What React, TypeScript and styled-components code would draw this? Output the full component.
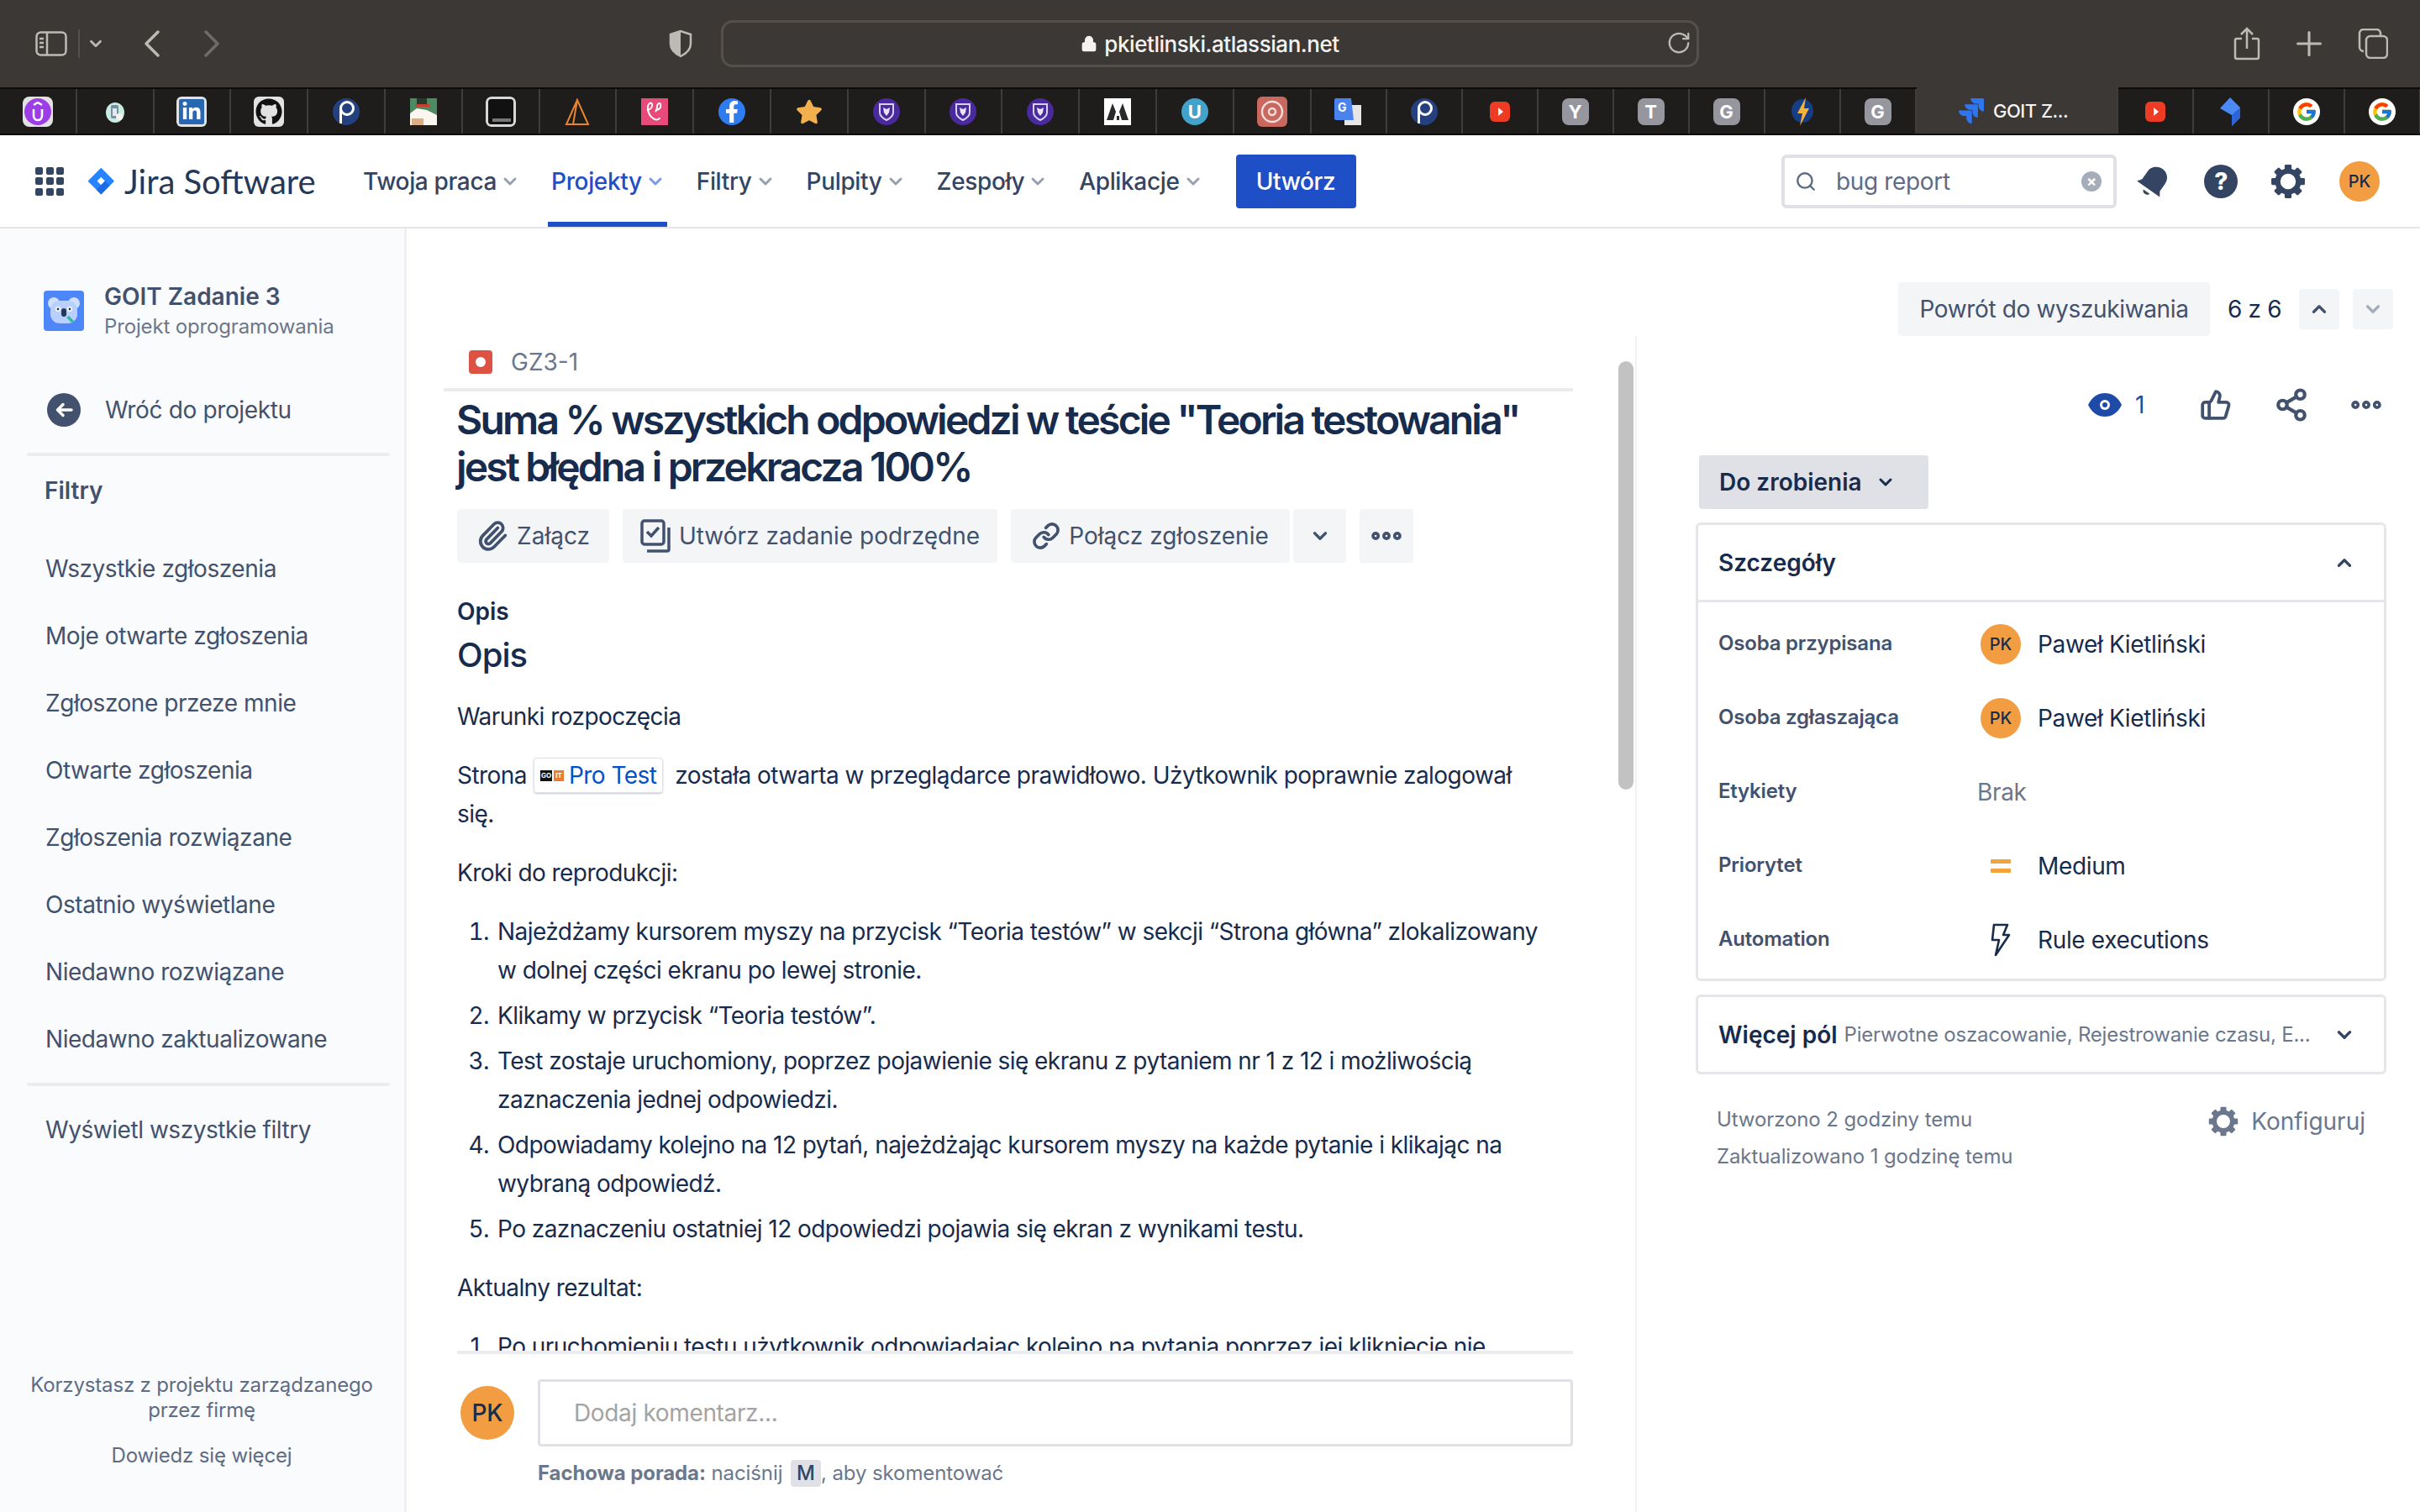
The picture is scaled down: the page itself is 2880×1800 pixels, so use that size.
import React from "react";
import styled, { createGlobalStyle } from "styled-components";
import { ChevronDown, ChevronUp, Lock, RotateCw, Search, Paperclip, Link, ThumbsUp, Share2, Ellipsis, ChevronLeft, ChevronRight, Plus } from "lucide-react";
import { FaGithub, FaLinkedinIn, FaFacebookF, FaStar } from "react-icons/fa";
import { FcGoogle } from "react-icons/fc";

const GlobalStyle = createGlobalStyle`
  html, body { margin: 0; padding: 0; background: #fff; }
  body { font-family: Inter, "Noto Sans", "Liberation Sans", sans-serif; color: #172b4d; letter-spacing: -0.35px; }
  * { box-sizing: border-box; }
`;

const Page = styled.div`
  width: 2880px;
  height: 1800px;
  overflow: hidden;
  display: flex;
  flex-direction: column;
`;

/* safari chrome */
const Toolbar = styled.div`
  height: 104px;
  flex: none;
  background: #3c3835;
  display: flex;
  align-items: center;
  color: #bdbab6;
  padding: 0 38px 0 42px;
`;
const ToolIcon = styled.div<{ $w: number; $dim?: boolean }>`
  width: ${(p) => p.$w}px;
  flex: none;
  display: flex;
  align-items: center;
  justify-content: center;
  opacity: ${(p) => (p.$dim ? 0.4 : 1)};
  svg {
    flex: none;
  }
`;
const SidebarToggle = styled.div`
  width: 53px;
  height: 34px;
  flex: none;
  display: flex;
  align-items: center;
  border-right: 2px solid #55504c;
`;
const ToolGroup = styled.div`
  display: flex;
  align-items: center;
  width: 753px;
`;
const UrlBar = styled.div`
  width: 1164px;
  height: 56px;
  margin-left: 33px;
  border: 3px solid #55504c;
  border-radius: 14px;
  display: flex;
  align-items: center;
  justify-content: center;
  position: relative;
  color: #f4f3f1;
  font-size: 26px;
  font-weight: 500;
  letter-spacing: -0.45px;
  gap: 8px;
`;
const Reload = styled.div`
  position: absolute;
  right: 6px;
  top: 9px;
  color: #bdbab6;
`;
const ToolRight = styled.div`
  margin-left: auto;
  display: flex;
  align-items: center;
  gap: 44px;
`;

const TabStrip = styled.div`
  height: 57px;
  flex: none;
  display: flex;
  background: #1e1d1c;
  border-top: 2px solid #0b0b0b;
  border-bottom: 2px solid #0b0b0b;
`;
const Tab = styled.div<{ $wide?: boolean }>`
  flex: 0 0 ${(p) => (p.$wide ? 91.8 : 90)}px;
  display: flex;
  align-items: center;
  justify-content: center;
  border-right: 2px solid #3f3d3b;
`;
const ActiveTab = styled.div`
  flex: 0 0 240px;
  margin-top: -2px;
  padding-right: 10px;
  background: #3c3835;
  display: flex;
  align-items: center;
  justify-content: center;
  gap: 8px;
  color: #f4f3f1;
  font-size: 22px;
  font-weight: 500;
  letter-spacing: -0.5px;
  border-right: 2px solid #3f3d3b;
`;
const Fav = styled.div<{ $bg?: string; $color?: string; $radius?: number; $size?: number; $font?: number }>`
  width: ${(p) => p.$size ?? 32}px;
  height: ${(p) => p.$size ?? 32}px;
  border-radius: ${(p) => p.$radius ?? 0}px;
  background: ${(p) => p.$bg ?? "transparent"};
  color: ${(p) => p.$color ?? "#fff"};
  display: flex;
  align-items: center;
  justify-content: center;
  font-size: ${(p) => p.$font ?? 22}px;
  font-weight: 700;
  letter-spacing: 0;
  overflow: hidden;
  flex: none;
`;

/* jira nav */
const Nav = styled.div`
  height: 111px;
  flex: none;
  background: #fff;
  border-bottom: 2px solid #e4e6ea;
  display: flex;
  align-items: center;
  padding: 0 48px 0 42px;
`;
const Waffle = styled.div`
  width: 34px;
  height: 34px;
  display: grid;
  grid-template-columns: repeat(3, 9px);
  grid-auto-rows: 9px;
  gap: 3.5px;
  flex: none;
  span {
    background: #344563;
    border-radius: 2px;
  }
`;
const Brand = styled.div`
  display: flex;
  align-items: center;
  gap: 10px;
  margin-left: 26px;
  font-family: Lato, Inter, sans-serif;
  font-size: 40px;
  font-weight: 400;
  letter-spacing: 0;
  color: #253858;
  width: 326px;
  flex: none;
`;
const NavItems = styled.div`
  display: flex;
  align-items: center;
  gap: 31px;
`;
const NavItem = styled.div<{ $active?: boolean }>`
  display: flex;
  align-items: center;
  gap: 4px;
  height: 109px;
  padding: 0 2px 0 4px;
  font-size: 28px;
  font-weight: 500;
  position: relative;
  color: ${(p) => (p.$active ? "#1f4fc6" : "#344563")};
  svg {
    color: ${(p) => (p.$active ? "#7a9be6" : "#97a0af")};
  }
  &::after {
    content: "";
    display: ${(p) => (p.$active ? "block" : "none")};
    position: absolute;
    left: 0;
    right: 0;
    bottom: 0;
    height: 6px;
    background: #1f4fc6;
  }
`;
const CreateButton = styled.div`
  margin-left: 37px;
  width: 143px;
  height: 64px;
  border-radius: 4px;
  background: #1f4fc6;
  color: #fff;
  font-size: 28px;
  font-weight: 500;
  display: flex;
  align-items: center;
  justify-content: center;
`;
const SearchBox = styled.div`
  margin-left: auto;
  width: 399px;
  height: 64px;
  border: 4px solid #dfe1e6;
  border-radius: 6px;
  display: flex;
  align-items: center;
  padding: 0 14px 0 12px;
  color: #5e6c84;
  font-size: 28px;
  gap: 23px;
`;
const ClearDot = styled.div`
  margin-left: auto;
  width: 24px;
  height: 24px;
  border-radius: 50%;
  background: #a5adba;
  color: #fff;
  display: flex;
  align-items: center;
  justify-content: center;
  font-size: 18px;
  font-weight: 700;
`;
const NavIcons = styled.div`
  display: flex;
  align-items: center;
  gap: 34px;
  margin-left: 22px;
`;
const Avatar = styled.div<{ $size: number; $offset?: number }>`
  width: ${(p) => p.$size}px;
  height: ${(p) => p.$size}px;
  margin-left: ${(p) => p.$offset ?? 0}px;
  border-radius: 50%;
  background: #f29d41;
  color: #172b4d;
  flex: none;
  display: flex;
  align-items: center;
  justify-content: center;
  font-size: ${(p) => (p.$size > 50 ? 28 : 20)}px;
  font-weight: 500;
  letter-spacing: 0;
`;

const Body = styled.div`
  flex: 1;
  display: flex;
  min-height: 0;
`;

/* sidebar */
const Sidebar = styled.aside`
  width: 484px;
  flex: none;
  background: #fafbfc;
  border-right: 3px solid #eeeff2;
  display: flex;
  flex-direction: column;
  padding: 0 16px 0 32px;
  color: #42526e;
  font-size: 28px;
  letter-spacing: -0.45px;
`;
const ProjectHead = styled.div`
  display: flex;
  align-items: center;
  gap: 24px;
  margin: 62px 0 0 20px;
`;
const ProjectIcon = styled.div`
  width: 48px;
  height: 48px;
  border-radius: 4px;
  background: #4c86f9;
  flex: none;
  display: flex;
  align-items: center;
  justify-content: center;
`;
const ProjectName = styled.div`
  font-size: 28px;
  font-weight: 600;
  line-height: 38px;
  letter-spacing: 0;
`;
const ProjectType = styled.div`
  font-size: 24px;
  line-height: 34px;
  letter-spacing: -0.15px;
  color: #6b778c;
`;
const BackRow = styled.div`
  display: flex;
  align-items: center;
  gap: 29px;
  margin: 62px 0 0 24px;
  height: 40px;
  letter-spacing: -0.35px;
`;
const BackDot = styled.div`
  width: 40px;
  height: 40px;
  border-radius: 50%;
  background: #42526e;
  color: #fff;
  flex: none;
  display: flex;
  align-items: center;
  justify-content: center;
`;
const SideRule = styled.div<{ $gap: number }>`
  height: 4px;
  background: #ebecf0;
  border-radius: 2px;
  margin-top: ${(p) => p.$gap}px;
  width: 432px;
  flex: none;
`;
const SideTitle = styled.div`
  font-weight: 600;
  letter-spacing: 0;
  margin: 23px 0 0 21px;
  height: 36px;
  line-height: 36px;
`;
const SideList = styled.div`
  display: flex;
  flex-direction: column;
  margin-top: 35px;
`;
const SideLink = styled.div<{ $gap?: number }>`
  height: 80px;
  line-height: 80px;
  margin-left: 22px;
  margin-top: ${(p) => p.$gap ?? 0}px;
`;
const SideFoot = styled.div`
  margin-top: auto;
  margin-bottom: 52px;
  text-align: center;
  font-size: 24px;
  line-height: 30px;
  letter-spacing: -0.15px;
  color: #5e6c84;
  width: 416px;
`;
const FootLink = styled.div`
  margin-top: 24px;
`;

/* main */
const Main = styled.main`
  flex: 1;
  min-width: 0;
  display: flex;
  flex-direction: column;
`;
const ReturnBar = styled.div`
  height: 128px;
  flex: none;
  display: flex;
  align-items: flex-end;
  justify-content: flex-end;
  padding-right: 32px;
`;
const ReturnButton = styled.div`
  height: 64px;
  width: 371px;
  border-radius: 4px;
  background: #f4f5f7;
  color: #42526e;
  font-size: 28px;
  display: flex;
  align-items: center;
  justify-content: center;
`;
const Counter = styled.div`
  height: 64px;
  display: flex;
  align-items: center;
  white-space: nowrap;
  font-size: 28px;
  margin: 0 20px 0 21px;
  width: 65px;
`;
const PagerButton = styled.div<{ $dim?: boolean }>`
  width: 48px;
  height: 48px;
  margin-bottom: 8px;
  border-radius: 4px;
  background: #f4f5f7;
  color: ${(p) => (p.$dim ? "#a5adba" : "#42526e")};
  display: flex;
  align-items: center;
  justify-content: center;
  & + & {
    margin-left: 16px;
  }
`;
const Split = styled.div`
  flex: 1;
  min-height: 0;
  display: flex;
`;
const IssueCol = styled.div`
  width: 1464px;
  flex: none;
  display: flex;
  flex-direction: column;
  border-right: 2px solid #f1f2f4;
  position: relative;
`;
const Scroller = styled.div`
  flex: 1;
  min-height: 0;
  overflow: hidden;
  margin-left: 44px;
  width: 1344px;
`;
const ScrollThumb = styled.div`
  position: absolute;
  left: 1442px;
  top: 30px;
  width: 18px;
  height: 510px;
  border-radius: 9px;
  background: #c2c2c2;
`;
const KeyRow = styled.div`
  height: 66px;
  border-bottom: 4px solid #ebecf0;
  display: flex;
  align-items: center;
  padding: 0 0 0 30px;
  gap: 22px;
  color: #6b778c;
  font-size: 28px;
  letter-spacing: 0;
`;
const BugIcon = styled.div`
  width: 28px;
  height: 28px;
  border-radius: 4px;
  background: #dc5243;
  display: flex;
  align-items: center;
  justify-content: center;
  &::after {
    content: "";
    width: 12px;
    height: 12px;
    border-radius: 50%;
    background: #fff;
  }
`;
const Title = styled.h1`
  margin: 6px 0 0 15px;
  font-size: 48px;
  line-height: 56px;
  font-weight: 600;
  letter-spacing: -2.8px;
  color: #172b4d;
  width: 1300px;
`;
const Actions = styled.div`
  display: flex;
  gap: 16px;
  margin: 22px 0 0 16px;
`;
const ActionButton = styled.div<{ $w: number }>`
  width: ${(p) => p.$w}px;
  height: 64px;
  border-radius: 4px;
  background: #f4f5f7;
  color: #42526e;
  font-size: 28px;
  letter-spacing: 0;
  display: flex;
  align-items: center;
  justify-content: center;
  gap: 10px;
  flex: none;
`;
const SplitGroup = styled.div`
  display: flex;
  gap: 4px;
`;
const Article = styled.div`
  margin: 0 0 0 16px;
  width: 1300px;
  font-size: 28px;
  line-height: 46px;
  letter-spacing: -0.55px;
  color: #172b4d;
  p {
    margin: 0 0 24px;
  }
  ol {
    margin: 0 0 24px;
    padding: 0 0 0 45px;
  }
  li {
    margin-bottom: 8px;
    padding-left: 3px;
  }
`;
const FieldLabel = styled.div`
  font-weight: 600;
  font-size: 28px;
  line-height: 40px;
  letter-spacing: 0;
  margin-top: 38px;
`;
const SectionHead = styled.h2`
  font-size: 40px;
  line-height: 48px;
  font-weight: 500;
  letter-spacing: -1px;
  margin: 8px 0 26px;
`;
const LinkChip = styled.span`
  display: inline-flex;
  align-items: center;
  gap: 6px;
  height: 42px;
  padding: 0 7px;
  margin: 0 14px 0 8px;
  border: 1px solid #dfe1e6;
  border-radius: 4px;
  box-shadow: 0 1px 2px rgba(9, 30, 66, 0.25);
  color: #0052cc;
  vertical-align: middle;
  position: relative;
  top: -2px;
`;
const GoitLogo = styled.span`
  display: inline-flex;
  gap: 2px;
  font-size: 8px;
  font-weight: 700;
  line-height: 13px;
  letter-spacing: 0;
  color: #fff;
  span {
    width: 14px;
    height: 13px;
    text-align: center;
    background: #111;
  }
  span:last-child {
    width: 12px;
    background: #ee7b31;
  }
`;
const CommentArea = styled.div`
  flex: none;
  height: 192px;
  margin-left: 60px;
  width: 1328px;
  border-top: 4px solid #ebecf0;
  display: flex;
  flex-direction: column;
`;
const CommentRow = styled.div`
  display: flex;
  gap: 28px;
  margin-top: 38px;
  padding-left: 4px;
`;
const CommentInput = styled.div`
  flex: 1;
  height: 80px;
  margin-top: -8px;
  border: 3px solid #dfe1e6;
  border-radius: 4px;
  display: flex;
  align-items: center;
  padding-left: 40px;
  color: #a3a3a3;
  font-size: 28px;
`;
const Tip = styled.div`
  margin: 16px 0 0 96px;
  font-size: 24px;
  color: #6b778c;
  line-height: 32px;
  letter-spacing: -0.1px;
  b {
    font-weight: 700;
  }
`;
const KeyCap = styled.span`
  display: inline-block;
  width: 36px;
  margin-left: 3px;
  text-align: center;
  border-radius: 4px;
  background: #dfe1e6;
  color: #344563;
  font-weight: 500;
`;

/* right panel */
const Side = styled.div`
  flex: 1;
  min-width: 0;
  padding: 0 40px 0 70px;
`;
const SideActions = styled.div`
  display: flex;
  align-items: center;
  justify-content: flex-end;
  height: 48px;
  margin-top: 58px;
  color: #42526e;
  padding-right: 2px;
  gap: 50px;
  & > svg:last-child {
    margin-left: -4px;
  }
`;
const WatchGroup = styled.div`
  display: flex;
  align-items: center;
  gap: 16px;
  color: #1e4aa8;
  font-size: 28px;
  margin-right: 16px;
`;
const StatusButton = styled.div`
  width: 273px;
  height: 64px;
  margin: 36px 0 0 4px;
  border-radius: 4px;
  background: #dfe1e6;
  color: #172b4d;
  font-size: 28px;
  font-weight: 600;
  letter-spacing: 0;
  display: flex;
  align-items: center;
  padding-left: 24px;
  gap: 16px;
`;
const Card = styled.div`
  margin: 16px 0 0 0;
  width: 822px;
  border: 3px solid #e4e6ea;
  border-radius: 6px;
`;
const CardHead = styled.div`
  height: 92px;
  border-bottom: 3px solid #e4e6ea;
  display: flex;
  align-items: center;
  justify-content: space-between;
  padding: 0 34px 0 24px;
  font-size: 28px;
  font-weight: 600;
  letter-spacing: 0;
`;
const Row = styled.div`
  height: 88px;
  display: grid;
  grid-template-columns: 308px 72px 1fr;
  align-items: center;
  padding-left: 24px;
  font-size: 28px;
`;
const Rows = styled.div`
  padding: 6px 0 2px;
`;
const RowLabel = styled.div`
  font-size: 24px;
  font-weight: 600;
  letter-spacing: -0.2px;
  color: #42526e;
  position: relative;
  top: -2px;
`;
const EmptyValue = styled.div`
  color: #6b778c;
`;
const MoreFields = styled.div`
  margin: 16px 0 0 0;
  width: 822px;
  height: 95px;
  border: 3px solid #e4e6ea;
  border-radius: 6px;
  display: flex;
  align-items: center;
  padding: 0 34px 0 24px;
  font-size: 28px;
  font-weight: 600;
  letter-spacing: 0;
  white-space: nowrap;
`;
const MoreHint = styled.span`
  font-size: 24px;
  font-weight: 400;
  letter-spacing: -0.2px;
  color: #6b778c;
  margin: 0 auto 0 8px;
`;
const Meta = styled.div`
  display: flex;
  justify-content: space-between;
  margin: 32px 0 0 25px;
  width: 772px;
  color: #6b778c;
  font-size: 24px;
  line-height: 44px;
  letter-spacing: -0.1px;
`;
const Configure = styled.div`
  display: flex;
  align-items: center;
  height: 44px;
  margin-top: 2px;
  gap: 14px;
  font-size: 28px;
  letter-spacing: 0;
`;

/* icons */
const Gear = ({ size, color }: { size: number; color: string }) => (
  <svg width={size} height={size} viewBox="0 0 32 32" fill="none">
    <circle cx="16" cy="16" r="9" stroke={color} strokeWidth="4.6" />
    {[0, 45, 90, 135, 180, 225, 270, 315].map((a) => (
      <rect key={a} x="13" y="1.5" width="6" height="6" rx="1" fill={color} transform={`rotate(${a} 16 16)`} />
    ))}
  </svg>
);

const JiraMark = () => (
  <svg width="36" height="36" viewBox="0 0 24 24">
    <path fill="#2684ff" d="M22.16 11.1 13.07 2.01 12.19 1.13 5.34 7.98 2.21 11.1a.84.84 0 0 0 0 1.18l6.25 6.25 3.72 3.72 6.85-6.85.11-.1 3.02-3.02a.83.83 0 0 0 0-1.18zM12.18 14.8 9.06 11.7l3.12-3.12 3.12 3.12-3.12 3.1z" />
    <path fill="#1d6ae5" d="M12.18 14.8 8.46 18.53l3.72 3.72 6.85-6.85-3.73-3.7z" />
  </svg>
);

const JiraStack = ({ size }: { size: number }) => (
  <svg width={size} height={size} viewBox="0 0 24 24" fill="#2f75f0">
    <path d="M11.53 2c0 2.4 1.97 4.35 4.35 4.35h1.78v1.7c0 2.4 1.94 4.34 4.34 4.35V2.84a.84.84 0 0 0-.84-.84H11.53z" />
    <path d="M6.77 6.8a4.36 4.36 0 0 0 4.34 4.34h1.8v1.72a4.36 4.36 0 0 0 4.34 4.34V7.63a.84.84 0 0 0-.83-.83H6.77z" />
    <path d="M2 11.6c0 2.4 1.95 4.34 4.35 4.34h1.78v1.72c.01 2.39 1.95 4.34 4.34 4.34V12.44a.84.84 0 0 0-.84-.84H2z" />
  </svg>
);

const Shield = () => (
  <Fav $bg="#4a2a9e" $radius={16}>
    <svg width="20" height="22" viewBox="0 0 20 22">
      <path d="M2 2h16v10c0 4-4 7-8 9-4-2-8-5-8-9z" fill="none" stroke="#d8d2f0" strokeWidth="2" />
      <path d="M6 6l4 2 4-2-1 6-3 4-3-4z" fill="#e8e4f6" />
    </svg>
  </Fav>
);

const PIcon = () => (
  <Fav $bg="#24407f" $radius={16} $font={34}>
    <svg width="20" height="28" viewBox="0 0 20 28" fill="none" stroke="#fff" strokeWidth="3"><circle cx="11" cy="10" r="7.5" /><path d="M3.5 10v18" /></svg>
  </Fav>
);
const GrayLetter = ({ c }: { c: string }) => <Fav $bg="#96969f" $radius={8}>{c}</Fav>;
const YtIcon = () => (
  <svg width="30" height="30" viewBox="0 0 30 30">
    <rect x="3" y="3" width="24" height="24" rx="6" fill="#ee3b24" />
    <path d="M13 10l6 5-6 5z" fill="#fff" />
  </svg>
);
const GoogleIcon = () => (
  <Fav $bg="#fff" $radius={16}>
    <FcGoogle size={26} />
  </Fav>
);

const leftTabs: React.ReactNode[] = [
  <Fav $bg="#e2e2e2" $radius={8} $size={36}>
    <Fav $bg="#9d3de8" $radius={16}>
      <svg width="16" height="24" viewBox="0 0 16 24" fill="none" stroke="#fff" strokeWidth="2.6"><path d="M3 4l5-3 5 3" /><path d="M3 9v8a5 5 0 0 0 10 0V9" /></svg>
    </Fav>
  </Fav>,
  <svg width="24" height="32" viewBox="0 0 24 32"><ellipse cx="12" cy="17" rx="11" ry="12" fill="#c8ece2" /><rect x="7" y="8" width="9" height="16" rx="2" fill="#7a8fa0" /><rect x="9" y="12" width="5" height="9" fill="#dfeaf2" /><circle cx="17" cy="22" r="4" fill="#f6f1ea" /></svg>,
  <Fav $bg="#e2e2e2" $radius={6} $size={36}><Fav $bg="#2867b2" $size={30} $radius={2}><FaLinkedinIn size={24} /></Fav></Fav>,
  <Fav $bg="#e2e2e2" $radius={6} $size={36} $color="#111"><FaGithub size={32} /></Fav>,
  <PIcon />,
  <svg width="32" height="32" viewBox="0 0 32 32"><rect width="32" height="32" fill="#4d8a62" /><rect x="8" y="0" width="12" height="8" fill="#243a2a" /><rect x="7" y="7" width="16" height="3" fill="#c93d32" /><path d="M0 32V18l8-6 12 2 12 6v12z" fill="#fbf7f0" /><rect x="2" y="24" width="14" height="8" fill="#dcae82" /></svg>,
  <Fav $bg="#111" $radius={6} $size={36}><svg width="36" height="36" viewBox="0 0 36 36"><rect x="1.5" y="1.5" width="33" height="33" rx="5" fill="none" stroke="#d8d8d8" strokeWidth="3" /><rect x="8" y="26" width="22" height="4" fill="#777" /></svg></Fav>,
  <svg width="32" height="32" viewBox="0 0 32 32" fill="none" stroke="#e8842f" strokeWidth="2"><path d="M16 2 3 31h26L16 2 11 31" /></svg>,
  <Fav $bg="#e74a7b"><svg width="26" height="28" viewBox="0 0 26 28" fill="none" stroke="#fff" strokeWidth="2"><path d="M4 12c5-1 7-4 6-7-1-3-5-1-5 4 0 6 2 11 8 14 3 1 6 0 6-2" /><path d="M15 12c5-1 6-4 5-7-1-2-4-1-4 3 0 3-1 5-2 6" /></svg></Fav>,
  <Fav $bg="#2f7cf0" $radius={16}><FaFacebookF size={26} /></Fav>,
  <FaStar size={32} color="#f3b04f" />,
  <Shield />,
  <Shield />,
  <Shield />,
  <Fav $bg="#fff" $color="#222"><svg width="28" height="24" viewBox="0 0 28 24" fill="#2a2a2a"><path d="M1 22 8 2l4 10-3 10zM27 22 20 2l-4 10 3 10z" /><path d="M13 17h3v5h-3z" /></svg></Fav>,
  <Fav $bg="#43a2c9" $radius={16}>U</Fav>,
  <Fav $bg="#c9685e" $radius={6} $size={36}><svg width="28" height="28" viewBox="0 0 28 28" fill="none" stroke="#f3dfdb" strokeWidth="2.4"><circle cx="14" cy="14" r="4" /><path d="M14 2a12 12 0 0 1 12 12M26 14a12 12 0 0 1-12 12M14 26A12 12 0 0 1 2 14M2 14A12 12 0 0 1 14 2" /></svg></Fav>,
];

const midTabs: React.ReactNode[] = [
  <svg width="34" height="32" viewBox="0 0 34 32"><rect x="12" y="8" width="20" height="24" fill="#e6e6e6" /><path d="M2 0h18l3 26H2a2 2 0 0 1-2-2V2a2 2 0 0 1 2-2z" fill="#4b83ee" /><text x="4" y="16" fontSize="14" fontWeight="700" fill="#fff">G</text></svg>,
  <PIcon />,
  <YtIcon />,
  <GrayLetter c="Y" />,
  <GrayLetter c="T" />,
  <GrayLetter c="G" />,
  <svg width="26" height="34" viewBox="0 0 26 34"><ellipse cx="13" cy="16" rx="13" ry="14" fill="#173d82" /><path d="M17 0 7 19h6l-3 15 11-21h-6z" fill="#f4b43c" /></svg>,
  <GrayLetter c="G" />,
];

export default function App() {
  return (
    <Page>
      <GlobalStyle />
      <Toolbar>
        <ToolGroup>
          <SidebarToggle>
            <svg width="38" height="30" viewBox="0 0 38 30" fill="none" stroke="#bdbab6" strokeWidth="2.5"><rect x="1.5" y="1.5" width="35" height="27" rx="5" /><path d="M14 2v26" /><path d="M5 9h5M5 14h5M5 19h5" /></svg>
          </SidebarToggle>
          <ToolIcon $w={38}><ChevronDown size={22} strokeWidth={3} /></ToolIcon>
          <ToolIcon $w={96}><ChevronLeft size={56} strokeWidth={1.5} /></ToolIcon>
          <ToolIcon $w={46} $dim><ChevronRight size={56} strokeWidth={1.5} /></ToolIcon>
        </ToolGroup>
        <ToolIcon $w={30}>
          <svg width="28" height="34" viewBox="0 0 28 32"><path d="M14 1 2 5v11c0 7 6 12 12 15 6-3 12-8 12-15V5z" fill="none" stroke="#bdbab6" strokeWidth="2.5" /><path d="M14 1 2 5v11c0 7 6 12 12 15z" fill="#bdbab6" /></svg>
        </ToolIcon>
        <UrlBar>
          <Lock size={20} fill="#f4f3f1" strokeWidth={2} />
          pkietlinski.atlassian.net
          <Reload><RotateCw size={30} strokeWidth={1.8} /></Reload>
        </UrlBar>
        <ToolRight>
          <ToolIcon $w={32}>
            <svg width="32" height="40" viewBox="0 0 32 40" fill="none" stroke="#bdbab6" strokeWidth="2.5"><path d="M10 14H4a2 2 0 0 0-2 2v20a2 2 0 0 0 2 2h24a2 2 0 0 0 2-2V16a2 2 0 0 0-2-2h-6" /><path d="M16 26V2M9 9l7-7 7 7" /></svg>
          </ToolIcon>
          <ToolIcon $w={28}><Plus size={46} strokeWidth={1.6} /></ToolIcon>
          <ToolIcon $w={36}>
            <svg width="36" height="36" viewBox="0 0 36 36" fill="none" stroke="#bdbab6" strokeWidth="2.5"><rect x="10" y="9" width="25" height="26" rx="5" /><path d="M7 27a5 5 0 0 1-5-5V6a5 5 0 0 1 5-5h15a5 5 0 0 1 5 5v2" /></svg>
          </ToolIcon>
        </ToolRight>
      </Toolbar>

      <TabStrip>
        {leftTabs.map((icon, i) => <Tab key={i} $wide>{icon}</Tab>)}
        {midTabs.map((icon, i) => <Tab key={i}>{icon}</Tab>)}
        <ActiveTab><JiraStack size={36} />GOIT Z...</ActiveTab>
        <Tab><YtIcon /></Tab>
        <Tab>
          <svg width="26" height="34" viewBox="0 0 26 34"><path d="M12 0l12 12v12L14 34V21L0 13z" fill="#4b8af5" /><path d="M14 21v13l10-10V12z" fill="#2b64d8" /></svg>
        </Tab>
        <Tab><GoogleIcon /></Tab>
        <Tab><GoogleIcon /></Tab>
      </TabStrip>

      <Nav>
        <Waffle>{Array.from({ length: 9 }).map((_, i) => <span key={i} />)}</Waffle>
        <Brand><JiraMark />Jira Software</Brand>
        <NavItems>
          {["Twoja praca", "Projekty", "Filtry", "Pulpity", "Zespoły", "Aplikacje"].map((t) => (
            <NavItem key={t} $active={t === "Projekty"}>{t}<ChevronDown size={24} strokeWidth={3} /></NavItem>
          ))}
        </NavItems>
        <CreateButton>Utwórz</CreateButton>
        <SearchBox>
          <Search size={26} strokeWidth={2.2} />
          bug report
          <ClearDot>×</ClearDot>
        </SearchBox>
        <NavIcons>
          <svg width="44" height="44" viewBox="0 0 24 24" fill="#344563"><g transform="rotate(35 12 12)"><path d="M12 2a7 7 0 0 0-7 7v6l-2 3h18l-2-3V9a7 7 0 0 0-7-7z" /><path d="M9.5 20a2.6 2.6 0 0 0 5 0z" /></g></svg>
          <svg width="48" height="48" viewBox="0 0 24 24"><circle cx="12" cy="12" r="10" fill="#344563" /><text x="12" y="17" textAnchor="middle" fontSize="14" fontWeight="800" fill="#fff" fontFamily="Inter, sans-serif">?</text></svg>
          <Gear size={44} color="#344563" />
          <Avatar $size={48} $offset={5}>PK</Avatar>
        </NavIcons>
      </Nav>

      <Body>
        <Sidebar>
          <ProjectHead>
            <ProjectIcon>
              <svg width="38" height="34" viewBox="0 0 38 34">
                <circle cx="7" cy="8" r="7" fill="#cfe0ff" />
                <circle cx="31" cy="8" r="7" fill="#cfe0ff" />
                <rect x="3" y="5" width="32" height="27" rx="11" fill="#b9cffd" />
                <circle cx="12" cy="15" r="3" fill="#fff" />
                <circle cx="26" cy="15" r="3" fill="#fff" />
                <circle cx="12" cy="15" r="1.4" fill="#253858" />
                <circle cx="26" cy="15" r="1.4" fill="#253858" />
                <rect x="16" y="14" width="6" height="10" rx="3" fill="#253858" />
                <path d="M25 23l7 7-4 1-6-6z" fill="#36b8a6" />
              </svg>
            </ProjectIcon>
            <div>
              <ProjectName>GOIT Zadanie 3</ProjectName>
              <ProjectType>Projekt oprogramowania</ProjectType>
            </div>
          </ProjectHead>
          <BackRow>
            <BackDot>
              <svg width="24" height="24" viewBox="0 0 24 24" fill="none" stroke="#fff" strokeWidth="3.4" strokeLinecap="round" strokeLinejoin="round"><path d="M21 12H5M11 5.5 4.5 12l6.5 6.5" /></svg>
            </BackDot>
            Wróć do projektu
          </BackRow>
          <SideRule $gap={31} />
          <SideTitle>Filtry</SideTitle>
          <SideList>
            {["Wszystkie zgłoszenia", "Moje otwarte zgłoszenia", "Zgłoszone przeze mnie", "Otwarte zgłoszenia", "Zgłoszenia rozwiązane", "Ostatnio wyświetlane", "Niedawno rozwiązane", "Niedawno zaktualizowane"].map((t) => (
              <SideLink key={t}>{t}</SideLink>
            ))}
          </SideList>
          <SideRule $gap={12} />
          <SideLink $gap={12}>Wyświetl wszystkie filtry</SideLink>
          <SideFoot>
            Korzystasz z projektu zarządzanego
            <br />
            przez firmę
            <FootLink>Dowiedz się więcej</FootLink>
          </SideFoot>
        </Sidebar>

        <Main>
          <ReturnBar>
            <ReturnButton>Powrót do wyszukiwania</ReturnButton>
            <Counter>6 z 6</Counter>
            <PagerButton><ChevronUp size={26} strokeWidth={3} /></PagerButton>
            <PagerButton $dim><ChevronDown size={26} strokeWidth={3} /></PagerButton>
          </ReturnBar>
          <Split>
            <IssueCol>
              <ScrollThumb />
              <Scroller>
                <KeyRow><BugIcon />GZ3-1</KeyRow>
                <Title>Suma % wszystkich odpowiedzi w teście "Teoria testowania" jest błędna i przekracza 100%</Title>
                <Actions>
                  <ActionButton $w={181}><Paperclip size={38} strokeWidth={2.4} />Załącz</ActionButton>
                  <ActionButton $w={446}>
                    <svg width="36" height="40" viewBox="0 0 36 40" fill="none" stroke="#42526e" strokeWidth="3.5"><rect x="2" y="2" width="26" height="28" rx="3" /><path d="M8 15l5 5 9-10" /><path d="M34 10v26a2 2 0 0 1-2 2H8" /></svg>
                    Utwórz zadanie podrzędne
                  </ActionButton>
                  <SplitGroup>
                    <ActionButton $w={332}><Link size={34} strokeWidth={2.6} />Połącz zgłoszenie</ActionButton>
                    <ActionButton $w={63}><ChevronDown size={26} strokeWidth={3} /></ActionButton>
                  </SplitGroup>
                  <ActionButton $w={64}><Ellipsis size={44} strokeWidth={3.4} /></ActionButton>
                </Actions>
                <Article>
                  <FieldLabel>Opis</FieldLabel>
                  <SectionHead>Opis</SectionHead>
                  <p>Warunki rozpoczęcia</p>
                  <p>
                    Strona
                    <LinkChip><GoitLogo><span>GO</span><span>IT</span></GoitLogo>Pro Test</LinkChip>
                    została otwarta w przeglądarce prawidłowo. Użytkownik poprawnie zalogował się.
                  </p>
                  <p>Kroki do reprodukcji:</p>
                  <ol>
                    <li>Najeżdżamy kursorem myszy na przycisk “Teoria testów” w sekcji “Strona główna” zlokalizowany w dolnej części ekranu po lewej stronie.</li>
                    <li>Klikamy w przycisk “Teoria testów”.</li>
                    <li>Test zostaje uruchomiony, poprzez pojawienie się ekranu z pytaniem nr 1 z 12 i możliwością zaznaczenia jednej odpowiedzi.</li>
                    <li>Odpowiadamy kolejno na 12 pytań, najeżdżając kursorem myszy na każde pytanie i klikając na wybraną odpowiedź.</li>
                    <li>Po zaznaczeniu ostatniej 12 odpowiedzi pojawia się ekran z wynikami testu.</li>
                  </ol>
                  <p>Aktualny rezultat:</p>
                  <ol>
                    <li>Po uruchomieniu testu użytkownik odpowiadając kolejno na pytania poprzez jej kliknięcie nie</li>
                  </ol>
                </Article>
              </Scroller>
              <CommentArea>
                <CommentRow>
                  <Avatar $size={64}>PK</Avatar>
                  <CommentInput>Dodaj komentarz...</CommentInput>
                </CommentRow>
                <Tip><b>Fachowa porada:</b> naciśnij <KeyCap>M</KeyCap>, aby skomentować</Tip>
              </CommentArea>
            </IssueCol>
            <Side>
              <SideActions>
                <WatchGroup>
                  <svg width="40" height="32" viewBox="0 0 40 32"><path d="M0 16C5 6 12 2 20 2s15 4 20 14c-5 10-12 14-20 14S5 26 0 16z" fill="#1e4aa8" /><circle cx="20" cy="16" r="6" fill="#fff" /><circle cx="20" cy="16" r="3" fill="#1e4aa8" /></svg>
                  1
                </WatchGroup>
                <ThumbsUp size={38} strokeWidth={2.4} />
                <Share2 size={42} strokeWidth={2.4} />
                <Ellipsis size={44} strokeWidth={3.4} />
              </SideActions>
              <StatusButton>Do zrobienia<ChevronDown size={24} strokeWidth={3} /></StatusButton>
              <Card>
                <CardHead>Szczegóły<ChevronUp size={26} strokeWidth={3} color="#344563" /></CardHead>
                <Rows>
                  <Row><RowLabel>Osoba przypisana</RowLabel><Avatar $size={48} $offset={4}>PK</Avatar>Paweł Kietliński</Row>
                  <Row><RowLabel>Osoba zgłaszająca</RowLabel><Avatar $size={48} $offset={4}>PK</Avatar>Paweł Kietliński</Row>
                  <Row><RowLabel>Etykiety</RowLabel><EmptyValue>Brak</EmptyValue></Row>
                  <Row>
                    <RowLabel>Priorytet</RowLabel>
                    <svg width="56" height="24" viewBox="0 0 56 24" fill="#f2a33a"><rect x="16" y="4" width="24" height="5" rx="1" /><rect x="16" y="15" width="24" height="5" rx="1" /></svg>
                    Medium
                  </Row>
                  <Row>
                    <RowLabel>Automation</RowLabel>
                    <svg width="56" height="40" viewBox="0 0 56 40" fill="none" stroke="#172b4d" strokeWidth="2.6" strokeLinejoin="round"><path d="M20 2h16l-5 12h7L22 38l4-18h-8z" /></svg>
                    Rule executions
                  </Row>
                </Rows>
              </Card>
              <MoreFields>
                Więcej pól
                <MoreHint>Pierwotne oszacowanie, Rejestrowanie czasu, E...</MoreHint>
                <ChevronDown size={26} strokeWidth={3} color="#344563" />
              </MoreFields>
              <Meta>
                <div>
                  Utworzono 2 godziny temu
                  <br />
                  Zaktualizowano 1 godzinę temu
                </div>
                <Configure><Gear size={38} color="#6b778c" />Konfiguruj</Configure>
              </Meta>
            </Side>
          </Split>
        </Main>
      </Body>
    </Page>
  );
}
